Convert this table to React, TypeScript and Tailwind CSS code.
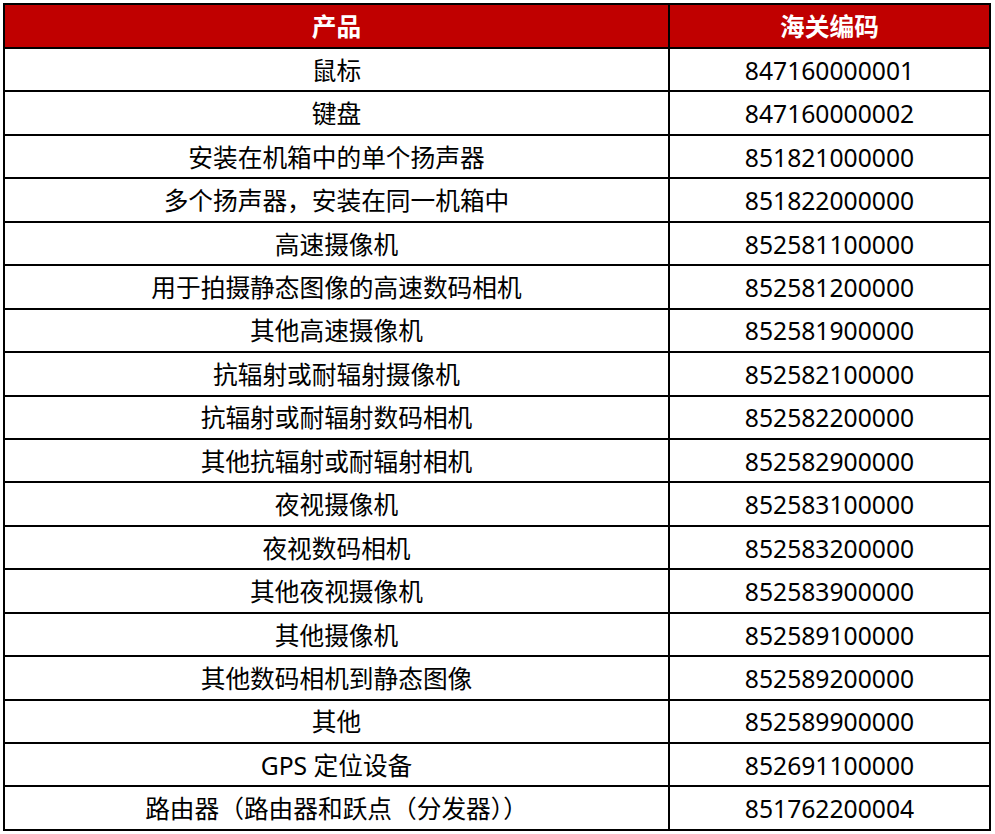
const rows: [string, string][] = [
  ["鼠标", "847160000001"],
  ["键盘", "847160000002"],
  ["安装在机箱中的单个扬声器", "851821000000"],
  ["多个扬声器，安装在同一机箱中", "851822000000"],
  ["高速摄像机", "852581100000"],
  ["用于拍摄静态图像的高速数码相机", "852581200000"],
  ["其他高速摄像机", "852581900000"],
  ["抗辐射或耐辐射摄像机", "852582100000"],
  ["抗辐射或耐辐射数码相机", "852582200000"],
  ["其他抗辐射或耐辐射相机", "852582900000"],
  ["夜视摄像机", "852583100000"],
  ["夜视数码相机", "852583200000"],
  ["其他夜视摄像机", "852583900000"],
  ["其他摄像机", "852589100000"],
  ["其他数码相机到静态图像", "852589200000"],
  ["其他", "852589900000"],
  ["GPS 定位设备", "852691100000"],
  ["路由器（路由器和跃点（分发器））", "851762200004"],
];

export default function App() {
  return (
    <div className="min-h-[834px] w-[995px] bg-white pl-[3px] pt-[3px] font-['Noto_Sans','Noto_Sans_CJK_SC',sans-serif] text-[24.7px] leading-none text-black">
      <table className="w-[988px] table-fixed border-collapse border-2 border-black">
        <thead>
          <tr className="h-[44px] bg-[#c00000] font-bold text-white">
            <th className="w-[665px] border-2 border-black pt-[2px]">产品</th>
            <th className="border-2 border-black pt-[2px]">海关编码</th>
          </tr>
        </thead>
        <tbody>
          {rows.map(([name, code]) => (
            <tr key={code} className="h-[43.45px]">
              <td className="border-2 border-black pt-[3px] text-center">{name}</td>
              <td className="border-2 border-black pt-[3px] text-center">{code}</td>
            </tr>
          ))}
        </tbody>
      </table>
    </div>
  );
}
